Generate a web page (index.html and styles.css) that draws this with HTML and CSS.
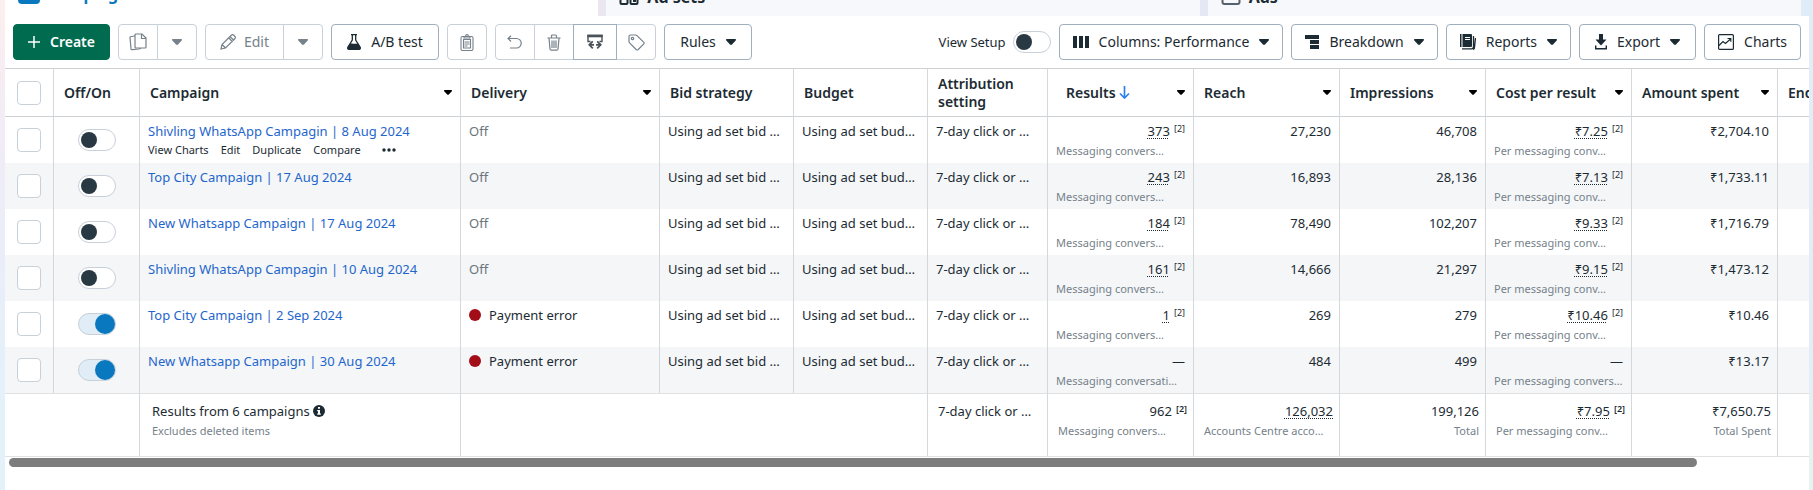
FILE: index.html
```html
<!DOCTYPE html>
<html lang="en">
<head>
<meta charset="utf-8">
<title>Ads Manager – Campaigns</title>
<link rel="stylesheet" href="styles.css">
</head>
<body>
<svg class="defs" aria-hidden="true">
  <symbol id="caret" viewBox="0 0 10 6"><path d="M.8 0h8.400q.8 0 .8.700t-.5 1L6 5.500q-1 .9-2 0L.5 1.700Q0 1.400 0 .7T.8 0z" fill="currentColor"/></symbol>
</svg>
<nav class="tabs" aria-label="Levels">
  <a class="tab tab-active" href="#campaigns"><span class="tab-badge"></span>Campaigns</a>
  <a class="tab" href="#adsets"><svg class="tab-icon" viewBox="0 0 20 20"><g fill="none" stroke="#1c2b33" stroke-width="2"><rect x="1.500" y="1" width="7" height="7" rx="1"/><rect x="11.500" y="1" width="7" height="7" rx="1"/><rect x="1.500" y="11" width="7" height="8" rx="1"/><rect x="11.500" y="11" width="7" height="8" rx="1"/></g><rect x="14" y="13" width="3" height="4" fill="#1c2b33"/></svg>Ad sets</a>
  <a class="tab" href="#ads"><svg class="tab-icon" viewBox="0 0 20 20"><rect x="1.500" y="1" width="17" height="18" rx="2" fill="none" stroke="#56616b" stroke-width="2"/></svg>Ads</a>
</nav>
<main class="panel">
  <div class="toolbar">
    <button class="btn btn-create"><svg width="12" height="12" viewBox="0 0 12 12"><path d="M6 0v12M0 6h12" stroke="#fff" stroke-width="1.500"/></svg>Create</button>
    <div class="group">
      <button class="btn muted icon-only" aria-label="Duplicate"><svg width="18" height="18" viewBox="0 0 18 18" fill="none" stroke="currentColor" stroke-width="1.200"><path d="M7 1h6l4 4v9a1 1 0 0 1-1 1H7a1 1 0 0 1-1-1V2a1 1 0 0 1 1-1z"/><path d="M12.500 1v4.500H17M6 3 2 3.500a1 1 0 0 0-1 1.200l1 11a1 1 0 0 0 1.200 1L10 16l2-.8"/></svg></button>
      <button class="btn muted icon-only" aria-label="Duplicate options"><svg class="caret"><use href="#caret"/></svg></button>
    </div>
    <div class="group">
      <button class="btn muted btn-edit"><svg width="16" height="16" viewBox="0 0 16 16" fill="none" stroke="currentColor" stroke-width="1.200"><path d="m1 15 1-4.500L11.500 1q1-.8 2 0l1.500 1.500q.8 1 0 2L5.500 14zM10 2.500 13.500 6M8.800 4l3.400 3.400M2 10.500 5.500 14"/></svg>Edit</button>
      <button class="btn muted icon-only" aria-label="Edit options"><svg class="caret"><use href="#caret"/></svg></button>
    </div>
    <button class="btn btn-test"><svg width="14" height="16" viewBox="0 0 14 16"><path d="M4 .7h6M5.300 1v5L1 13q-.8 2.300 1 2.300h10q1.800 0 1-2.300L8.700 6V1" fill="none" stroke="currentColor" stroke-width="1.300"/><path d="M3 10c2-1.500 4 .8 8-.7l2.500 4q.5 2.400-1.500 2.400H2q-2 0-1.500-2.400z" fill="currentColor"/></svg>A/B test</button>
    <button class="btn muted icon-only" aria-label="Paste"><svg width="14" height="17" viewBox="0 0 14 17" fill="none" stroke="currentColor" stroke-width="1.100"><rect x="1" y="2.500" width="12" height="14" rx="1.500"/><path d="M3.500 14V5.500h7V14z M4.500 8h5M4.500 10h5M4.500 12h3"/><path d="M4 4V2.500h1.500q0-1.900 1.500-1.900t1.500 1.900H10V4z"/></svg></button>
    <div class="group">
      <button class="btn muted icon-only" aria-label="Undo"><svg width="16" height="14" viewBox="0 0 16 14" fill="none" stroke="currentColor" stroke-width="1.200"><path d="M4 .7 1 3.500l3 3M1 3.500h8.500a4.700 4.700 0 0 1 0 9.500H3"/></svg></button>
      <button class="btn muted icon-only" aria-label="Delete"><svg width="14" height="17" viewBox="0 0 14 17" fill="none" stroke="currentColor" stroke-width="1.200"><path d="M.5 4h13M4.500 3.500V2q0-1 1-1h3q1 0 1 1v1.500M2 4.500 3 15q.1 1.200 1.200 1.200h5.600q1.100 0 1.200-1.200l1-10.500M5 6.500v7.500M7 6.500v7.500M9 6.500v7.500"/></svg></button>
      <button class="btn icon-only strong" aria-label="Import and export"><svg width="16" height="16" viewBox="0 0 16 16" fill="none" stroke="#4b5359"><path d="M3.500 7.500H1V1.500h14v6h-2.500" stroke-width="1.400"/><path d="M.3 2h15.400" stroke-width="2.600"/><path d="M5.800 7.300 2.300 10.800l3.500 3.500M2.500 10.800H7M10.200 7.300l3.500 3.500-3.500 3.500M13.500 10.800H9" stroke-width="1.800"/></svg></button>
      <button class="btn muted icon-only" aria-label="Tag"><svg width="17" height="17" viewBox="0 0 17 17" fill="none" stroke="currentColor" stroke-width="1.200"><path d="M1 2.500v5q0 .8.600 1.400l6.800 6.800q.8.600 1.600 0l5.800-5.800q.6-.8 0-1.600L9 1.600Q8.400 1 7.600 1H2.500Q1 1 1 2.500z"/><circle cx="4.500" cy="4.500" r="1.200"/></svg></button>
    </div>
    <button class="btn btn-rules">Rules<svg class="caret"><use href="#caret"/></svg></button>
    <label class="setup">View Setup<input class="toggle" type="checkbox"></label>
    <button class="btn btn-view"><svg width="16" height="12" viewBox="0 0 16 12" fill="currentColor"><path d="M0 0h4v12H0zM6 0h4v12H6zM12 0h4v12h-4z"/></svg>Columns: Performance<svg class="caret"><use href="#caret"/></svg></button>
    <button class="btn btn-view"><svg width="14" height="14" viewBox="0 0 14 14" fill="currentColor"><path d="M0 0h14v4H0zM5 5h9v4H5zM5 10h9v4H5z"/></svg>Breakdown<svg class="caret"><use href="#caret"/></svg></button>
    <button class="btn btn-view"><svg width="16" height="16" viewBox="0 0 16 16"><path d="M0 0h1.500v13H0zM2.500 0H11q1 0 1 1v11q0 1-1 1H2.500z" fill="currentColor"/><path d="M5 3.500h5M5 5.500h5" stroke="#fff"/><path d="M2 14.800h9.500q2 0 2-2V2M13 15.300q1.200 0 1.400-1.200L15.500 4" fill="none" stroke="currentColor" stroke-width="1.300"/></svg>Reports<svg class="caret"><use href="#caret"/></svg></button>
    <button class="btn btn-view btn-export"><svg width="12" height="16" viewBox="0 0 12 16"><path d="M4 0h4v5.500h3.500L6 11.500.5 5.500H4z" fill="currentColor"/><path d="M.7 11.500v3.300h10.600v-3.300" fill="none" stroke="currentColor" stroke-width="1.500"/></svg>Export<svg class="caret"><use href="#caret"/></svg></button>
    <button class="btn btn-view btn-charts"><svg width="16" height="16" viewBox="0 0 16 16" fill="none" stroke="currentColor" stroke-width="1.200"><rect x=".6" y=".6" width="14.800" height="14.800" rx="1"/><path d="m1 11.500 4-4 2.500 2L12.500 5M9.500 4.500h3.300v3.300"/></svg>Charts</button>
  </div>

  <table class="grid">
    <colgroup><col class="w-check"><col class="w-switch"><col class="w-name"><col class="w-delivery"><col class="w-bid"><col class="w-bid"><col class="w-attr"><col class="w-num"><col class="w-num"><col class="w-num"><col class="w-num"><col class="w-num"><col></colgroup>
    <thead>
      <tr>
        <th class="check"><input type="checkbox" class="box" aria-label="Select all"></th>
        <th>Off/On</th>
        <th><div class="head">Campaign<svg class="sort"><use href="#caret"/></svg></div></th>
        <th><div class="head">Delivery<svg class="sort"><use href="#caret"/></svg></div></th>
        <th>Bid strategy</th>
        <th>Budget</th>
        <th>Attribution setting</th>
        <th class="sorted"><div class="head"><span>Results<svg class="down" viewBox="0 0 11 13"><path d="M5.500 0v12M1 7.500l4.500 4.500L10 7.500" fill="none" stroke="#2d7ff0" stroke-width="1.700"/></svg></span><svg class="sort"><use href="#caret"/></svg></div></th>
        <th><div class="head">Reach<svg class="sort"><use href="#caret"/></svg></div></th>
        <th><div class="head">Impressions<svg class="sort"><use href="#caret"/></svg></div></th>
        <th><div class="head">Cost per result<svg class="sort"><use href="#caret"/></svg></div></th>
        <th><div class="head">Amount spent<svg class="sort"><use href="#caret"/></svg></div></th>
        <th>Ends</th>
      </tr>
    </thead>
    <tbody>
      <tr>
        <td class="check"><input type="checkbox" class="box" aria-label="Select campaign"></td>
        <td class="switch"><input type="checkbox" class="toggle" aria-label="Campaign on"></td>
        <td><a class="name" href="#c1">Shivling WhatsApp Campagin | 8 Aug 2024</a>
          <div class="actions"><a href="#charts">View Charts</a><a href="#edit">Edit</a><a href="#dup">Duplicate</a><a href="#cmp">Compare</a><button class="more" aria-label="More"><svg width="14" height="4" viewBox="0 0 14 4" fill="#1c2b33"><circle cx="2" cy="2" r="1.700"/><circle cx="7" cy="2" r="1.700"/><circle cx="12" cy="2" r="1.700"/></svg></button></div></td>
        <td class="off">Off</td><td>Using ad set bid …</td><td>Using ad set bud…</td><td>7-day click or …</td>
        <td class="num"><span class="tip">373</span><sup>[2]</sup><small>Messaging convers…</small></td>
        <td class="num">27,230</td><td class="num">46,708</td>
        <td class="num"><span class="tip">₹7.25</span><sup>[2]</sup><small>Per messaging conv…</small></td>
        <td class="num">₹2,704.10</td><td></td>
      </tr>
      <tr>
        <td class="check"><input type="checkbox" class="box" aria-label="Select campaign"></td>
        <td class="switch"><input type="checkbox" class="toggle" aria-label="Campaign on"></td>
        <td><a class="name" href="#c2">Top City Campaign | 17 Aug 2024</a></td>
        <td class="off">Off</td><td>Using ad set bid …</td><td>Using ad set bud…</td><td>7-day click or …</td>
        <td class="num"><span class="tip">243</span><sup>[2]</sup><small>Messaging convers…</small></td>
        <td class="num">16,893</td><td class="num">28,136</td>
        <td class="num"><span class="tip">₹7.13</span><sup>[2]</sup><small>Per messaging conv…</small></td>
        <td class="num">₹1,733.11</td><td></td>
      </tr>
      <tr>
        <td class="check"><input type="checkbox" class="box" aria-label="Select campaign"></td>
        <td class="switch"><input type="checkbox" class="toggle" aria-label="Campaign on"></td>
        <td><a class="name" href="#c3">New Whatsapp Campaign | 17 Aug 2024</a></td>
        <td class="off">Off</td><td>Using ad set bid …</td><td>Using ad set bud…</td><td>7-day click or …</td>
        <td class="num"><span class="tip">184</span><sup>[2]</sup><small>Messaging convers…</small></td>
        <td class="num">78,490</td><td class="num">102,207</td>
        <td class="num"><span class="tip">₹9.33</span><sup>[2]</sup><small>Per messaging conv…</small></td>
        <td class="num">₹1,716.79</td><td></td>
      </tr>
      <tr>
        <td class="check"><input type="checkbox" class="box" aria-label="Select campaign"></td>
        <td class="switch"><input type="checkbox" class="toggle" aria-label="Campaign on"></td>
        <td><a class="name" href="#c4">Shivling WhatsApp Campagin | 10 Aug 2024</a></td>
        <td class="off">Off</td><td>Using ad set bid …</td><td>Using ad set bud…</td><td>7-day click or …</td>
        <td class="num"><span class="tip">161</span><sup>[2]</sup><small>Messaging convers…</small></td>
        <td class="num">14,666</td><td class="num">21,297</td>
        <td class="num"><span class="tip">₹9.15</span><sup>[2]</sup><small>Per messaging conv…</small></td>
        <td class="num">₹1,473.12</td><td></td>
      </tr>
      <tr>
        <td class="check"><input type="checkbox" class="box" aria-label="Select campaign"></td>
        <td class="switch"><input type="checkbox" class="toggle" aria-label="Campaign on" checked></td>
        <td><a class="name" href="#c5">Top City Campaign | 2 Sep 2024</a></td>
        <td><span class="error">Payment error</span></td><td>Using ad set bid …</td><td>Using ad set bud…</td><td>7-day click or …</td>
        <td class="num"><span class="tip">1</span><sup>[2]</sup><small>Messaging convers…</small></td>
        <td class="num">269</td><td class="num">279</td>
        <td class="num"><span class="tip">₹10.46</span><sup>[2]</sup><small>Per messaging conv…</small></td>
        <td class="num">₹10.46</td><td></td>
      </tr>
      <tr>
        <td class="check"><input type="checkbox" class="box" aria-label="Select campaign"></td>
        <td class="switch"><input type="checkbox" class="toggle" aria-label="Campaign on" checked></td>
        <td><a class="name" href="#c6">New Whatsapp Campaign | 30 Aug 2024</a></td>
        <td><span class="error">Payment error</span></td><td>Using ad set bid …</td><td>Using ad set bud…</td><td>7-day click or …</td>
        <td class="num">—<small>Messaging conversati…</small></td>
        <td class="num">484</td><td class="num">499</td>
        <td class="num">—<small>Per messaging convers…</small></td>
        <td class="num">₹13.17</td><td></td>
      </tr>
    </tbody>
    <tfoot>
      <tr>
        <td colspan="2"></td>
        <td class="summary">Results from 6 campaigns <svg class="info" viewBox="0 0 12 12"><circle cx="6" cy="6" r="6" fill="#1c2b33"/><path d="M5 2h2v1.800H5zM4.200 5H7v3.500h.8v1.200H4.200V8.500H5V6.200h-.8z" fill="#fff"/></svg><small>Excludes deleted items</small></td>
        <td colspan="3"></td>
        <td>7-day click or …</td>
        <td class="num">962<sup>[2]</sup><small>Messaging convers…</small></td>
        <td class="num"><span class="tip">126,032</span><small>Accounts Centre acco…</small></td>
        <td class="num">199,126<small class="end">Total</small></td>
        <td class="num"><span class="tip">₹7.95</span><sup>[2]</sup><small>Per messaging conv…</small></td>
        <td class="num">₹7,650.75<small class="end">Total Spent</small></td>
        <td></td>
      </tr>
    </tfoot>
  </table>
  <div class="scroll"><div class="thumb"></div></div>
</main>
</body>
</html>
```
FILE: styles.css
```css
* { box-sizing: border-box; }
html, body { height: 100%; }
body {
  margin: 0;
  display: flex;
  flex-direction: column;
  padding: 0 4px 0 5px;
  overflow: hidden;
  font-family: "Noto Sans", "Open Sans", sans-serif;
  font-size: 13px;
  line-height: 20px;
  color: #1c2b33;
  background:
    linear-gradient(#fcefef, #f2ecf5 25%, #ebedf9 50%, #e4f0fa 75%) left / 50% 100% no-repeat,
    linear-gradient(#e0edf8, #e0eef8 70%, #e4f4f0) right / 50% 100% no-repeat;
}
a { color: inherit; text-decoration: none; }
svg { flex: none; }
.defs { position: absolute; width: 0; height: 0; }

.tabs {
  display: flex;
  gap: 8px;
  height: 16px;
  padding-right: 8px;
  background: linear-gradient(90deg, #fcefef, #ebe6f0 33%, #e5e8f4 66%, #e0edf8);
}
.tab {
  flex: 1;
  display: flex;
  align-items: flex-end;
  gap: 8px;
  padding: 0 13px 7px;
  background: #f7f8fc;
  font-size: 16px;
  font-weight: 700;
  line-height: 24px;
}
.tab-active { background: #fff; color: #0a78be; padding-bottom: 10px; }
.tab-badge { width: 22px; height: 22px; margin-bottom: 2px; border-radius: 4px; background: #0a78be; }
.tab-icon { width: 20px; height: 20px; margin-bottom: 4px; }

.panel { flex: 1; background: #fff; }
.toolbar { display: flex; align-items: center; gap: 8px; padding: 8px; }
.group { display: flex; }
.btn {
  display: flex;
  align-items: center;
  justify-content: center;
  height: 36px;
  gap: 10px;
  padding: 0 15px;
  border: 1px solid #9fafbd;
  border-radius: 4px;
  background: #fff;
  color: #1c2b33;
  font: 14px/20px "Noto Sans", sans-serif;
  white-space: nowrap;
}
.muted { color: #76818a; border-color: #c8d0d9; }
.icon-only { width: 40px; padding: 0; }
.group .btn:not(:first-child) { margin-left: -1px; border-top-left-radius: 0; border-bottom-left-radius: 0; }
.group .btn:not(:last-child) { border-top-right-radius: 0; border-bottom-right-radius: 0; }
.group .strong { z-index: 1; width: 44px; border-color: #9fafbd; }
.btn-create { width: 97px; border-color: #006b4e; background: #006b4e; color: #fff; font-weight: 600; }
.btn-edit { width: 79px; gap: 8px; }
.btn-test { width: 108px; }
.btn-rules { width: 88px; }
.btn-view { gap: 10px; padding: 0 13px; }
.btn-export { padding: 0 15px; }
.caret { width: 10px; height: 6px; }
.setup { display: flex; align-items: center; gap: 7px; margin-left: auto; }

.toggle {
  appearance: none;
  display: flex;
  align-items: center;
  width: 38px;
  height: 22px;
  margin: 0;
  padding: 0 2px;
  border: 1px solid #c8d0d9;
  border-radius: 11px;
  background: #fff;
}
.toggle::before { content: ""; width: 16px; height: 16px; border-radius: 50%; background: #283943; }
.toggle:checked { justify-content: flex-end; padding: 0; background: #e0edf7; }
.toggle:checked::before { width: 20px; height: 20px; background: #0a78be; }
.box {
  appearance: none;
  display: block;
  width: 24px;
  height: 24px;
  margin: 0;
  border: 1px solid #c8d0d9;
  border-radius: 4px;
  background: #fff;
}

.grid { width: 100%; table-layout: fixed; border-collapse: separate; border-spacing: 0; }
.w-check { width: 49px; }
.w-switch { width: 86px; }
.w-name { width: 321px; }
.w-delivery { width: 199px; }
.w-bid { width: 134px; }
.w-attr { width: 120px; }
.w-num { width: 146px; }
.grid th, .grid td { overflow: hidden; white-space: nowrap; border-right: 1px solid #d5d8da; }
.grid th:last-child, .grid td:last-child { border-right: 0; }
.grid th {
  height: 49px;
  padding: 0 8px 0 10px;
  border-top: 1px solid #cfd2d4;
  border-bottom: 1px solid #cfd2d4;
  text-align: left;
  font-weight: 600;
  font-size: 14px;
  line-height: 18px;
}
.grid th:nth-child(7) { white-space: normal; }
.grid th.sorted { padding-left: 18px; }
.head { display: flex; align-items: center; justify-content: space-between; }
.sort { width: 8px; height: 5px; color: #000; }
.down { width: 11px; height: 13px; margin-left: 3px; vertical-align: -1px; }
.grid td { height: 46px; padding: 4px 8px 0; vertical-align: top; }
.grid .check { padding: 0 0 0 12px; vertical-align: middle; }
.grid .switch { padding: 0 0 0 24px; vertical-align: middle; }
tbody tr:nth-child(even) { background: #f4f6f8; }
.name { display: block; color: #1f66cc; }
.actions { display: flex; align-items: center; gap: 12px; font-size: 11px; line-height: 18px; }
.more { display: flex; margin-left: 9px; padding: 0; border: 0; background: none; }
.grid .off { color: #6c757c; }
.error { display: flex; align-items: center; gap: 8px; }
.error::before { content: ""; width: 12px; height: 12px; border-radius: 50%; background: #a30d17; }
.grid .num { text-align: right; }
.tip { text-decoration: underline dotted 1px; text-underline-offset: 2px; }
sup { margin-left: 4px; font-size: 9px; line-height: 1px; vertical-align: 4px; }
small { display: block; font-size: 11px; line-height: 19px; color: #76818a; text-align: left; }
small.end { text-align: right; }
.grid tfoot td { height: 64px; padding: 7px 6px 0 10px; border-top: 1px solid #dfe1e3; border-bottom: 1px solid #dfe1e3; }
.grid tfoot .summary { padding-left: 12px; }
tfoot sup { font-weight: 600; }
.info { width: 12px; height: 12px; vertical-align: -1px; }

.scroll { padding: 1px 4px; }
.thumb { width: 94%; height: 9px; border-radius: 5px; background: #7d7d7d; }
```
